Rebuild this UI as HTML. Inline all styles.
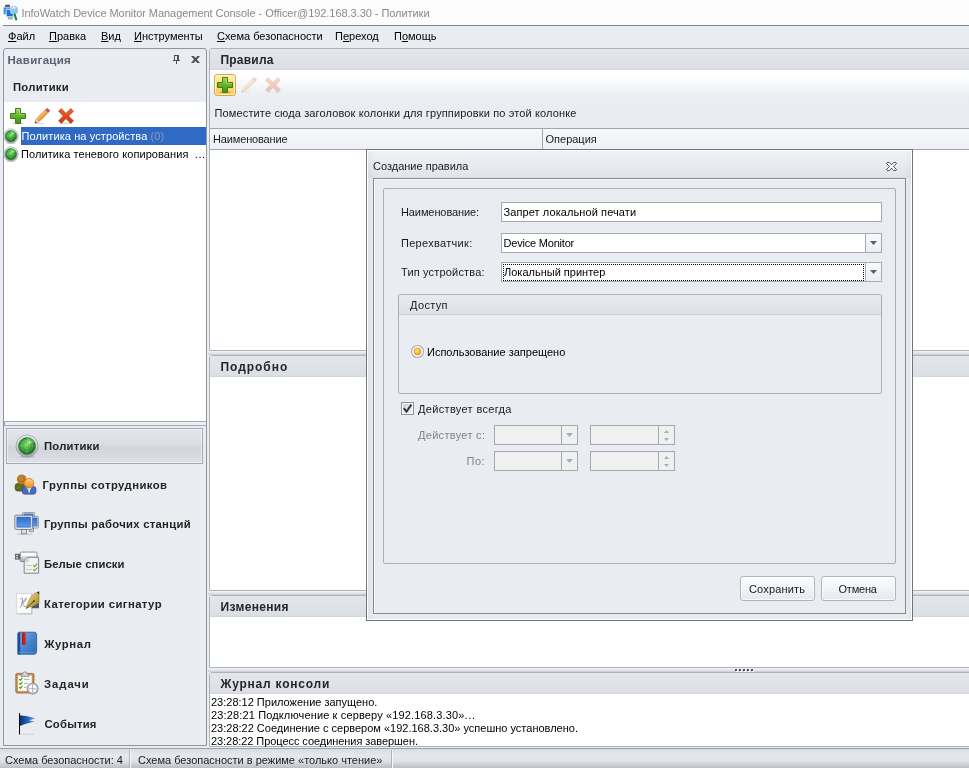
<!DOCTYPE html>
<html lang="ru">
<head>
<meta charset="utf-8">
<title>InfoWatch Device Monitor Management Console</title>
<style>
*{box-sizing:border-box;margin:0;padding:0}
html,body{width:969px;height:768px;overflow:hidden}
body{will-change:transform}
body{position:relative;background:#e9ecf1;font-family:"Liberation Sans",sans-serif;font-size:11px;color:#000;line-height:13px}
.a{position:absolute;white-space:nowrap}
.b{font-weight:bold}
svg{position:absolute;overflow:visible}
u{text-decoration:underline;text-underline-offset:1px}
#title{left:0;top:0;width:969px;height:25px;background:#fcfcfc}
#title .t{left:21.5px;top:6px;color:#8a8a8a;line-height:14px;letter-spacing:-0.05px}
#titleline{left:3px;top:25px;width:966px;height:1px;background:#7e848c}
#menu{left:0;top:26px;width:969px;height:22px}
#menu span{position:absolute;top:4px;line-height:13px}
.white{background:#fff}
.ptitle{font-weight:bold;font-size:12px;color:#262626;line-height:15px}
.nb{left:44.5px;font-weight:bold;font-size:11.3px;color:#242424;line-height:14px}
.rp{left:209px;width:770px;border:1px solid #adb2ba;border-radius:3px 0 0 0;background:#fff}
.hd{left:210px;width:759px;height:21px;background:linear-gradient(#e3e6eb,#dcdfe5 90%,#d2d6dc)}
.gap{left:208px;width:761px;height:4px;background:linear-gradient(#f4f5f7,#e6e8ec 45%,#c8cbd1)}
.fld{background:#fff;border:1px solid #a4aab3;height:20px}
.dis{background:#f0f0f0;border:1px solid #a3a9b3;height:20px}
.btn{border:1px solid #b0b5bd;border-radius:3px;background:linear-gradient(#fbfcfd,#f1f3f5 50%,#e6e9ed);width:75px;height:25px;box-shadow:inset 0 0 0 1px rgba(255,255,255,.7)}
.lbl{color:#1a1a1a}
</style>
</head>
<body>
<svg width="0" height="0" style="left:0;top:0">
<defs>
<linearGradient id="gGreen" x1="0" y1="0" x2="0" y2="1"><stop offset="0" stop-color="#a4d65c"/><stop offset=".45" stop-color="#6ab62e"/><stop offset="1" stop-color="#3f8f1c"/></linearGradient>
<linearGradient id="gRed" x1="0" y1="0" x2="0" y2="1"><stop offset="0" stop-color="#f0642c"/><stop offset="1" stop-color="#c8360c"/></linearGradient>
<linearGradient id="gSilver" x1="0" y1="0" x2="0" y2="1"><stop offset="0" stop-color="#e6e7e9"/><stop offset=".5" stop-color="#c4c6c9"/><stop offset="1" stop-color="#94979b"/></linearGradient>
<radialGradient id="gRadar" cx=".45" cy=".4" r=".62"><stop offset="0" stop-color="#7ad460"/><stop offset=".5" stop-color="#35a236"/><stop offset="1" stop-color="#17681f"/></radialGradient>
<linearGradient id="gScreen" x1="0" y1="0" x2="0" y2="1"><stop offset="0" stop-color="#2e6fd0"/><stop offset="1" stop-color="#5a9be6"/></linearGradient>
<linearGradient id="gBook" x1="0" y1="0" x2="1" y2="1"><stop offset="0" stop-color="#7ab0e6"/><stop offset=".5" stop-color="#4a88d0"/><stop offset="1" stop-color="#2f68b8"/></linearGradient>
<linearGradient id="gFlag" x1="0" y1="0" x2="1" y2="0"><stop offset="0" stop-color="#0c2f6e"/><stop offset=".6" stop-color="#2f6fc4"/><stop offset="1" stop-color="#7fb2ea"/></linearGradient>
<linearGradient id="gOrange" x1="0" y1="0" x2="0" y2="1"><stop offset="0" stop-color="#fdd48a"/><stop offset="1" stop-color="#ee8a1a"/></linearGradient>
<linearGradient id="gBrown" x1="0" y1="0" x2="0" y2="1"><stop offset="0" stop-color="#d08a3a"/><stop offset="1" stop-color="#8a4c12"/></linearGradient>
<radialGradient id="gDot" cx=".4" cy=".35" r=".7"><stop offset="0" stop-color="#ffe870"/><stop offset="1" stop-color="#f09a10"/></radialGradient>
<linearGradient id="gChk" x1="0" y1="0" x2="1" y2="1"><stop offset="0" stop-color="#cfd1d6"/><stop offset="1" stop-color="#f4f5f6"/></linearGradient>
<linearGradient id="gUsb" x1="0" y1="0" x2="0" y2="1"><stop offset="0" stop-color="#fafafa"/><stop offset=".55" stop-color="#d4d6d9"/><stop offset="1" stop-color="#a2a5a9"/></linearGradient>
<symbol id="plus" viewBox="0 0 16 16"><ellipse cx="8" cy="15.3" rx="6" ry=".9" fill="#000" opacity=".18"/><path d="M5.5,.5h5v5h5v5h-5v5h-5v-5h-5v-5h5z" fill="url(#gGreen)" stroke="#3c7f1c" stroke-width="1" stroke-linejoin="round"/><path d="M6.5,1.5h3v5h5" fill="none" stroke="#c9ea9a" stroke-width="1" opacity=".6"/></symbol>
<symbol id="pencil" viewBox="0 0 16 16"><ellipse cx="5" cy="15.5" rx="5" ry=".7" fill="#000" opacity=".15"/><path d="M1,15 L2.2,11.2 L11.3,2.1 L13.9,4.7 L4.8,13.8 Z" fill="#f6a12a" stroke="#b8690c" stroke-width=".7"/><path d="M3,11.6 L11.8,2.8" stroke="#fdd890" stroke-width="1"/><path d="M1,15 L2.2,11.2 L4.8,13.8 Z" fill="#f4dcb8"/><path d="M1,15 L1.6,13.1 L2.9,14.4 Z" fill="#3a3a3a"/><path d="M11.3,2.1 L12.8,.6 Q13.3,.2 13.9,.7 L15.3,2.1 Q15.8,2.7 15.4,3.2 L13.9,4.7 Z" fill="#d9534f" stroke="#a8322e" stroke-width=".5"/><path d="M10.6,2.8 L13.2,5.4 L13.9,4.7 L11.3,2.1 Z" fill="#b8bcc4"/></symbol>
<symbol id="xred" viewBox="0 0 16 16"><ellipse cx="8" cy="15.4" rx="6" ry=".8" fill="#000" opacity=".15"/><path d="M3.2,.6 L8,5.4 L12.8,.6 L15.4,3.2 L10.6,8 L15.4,12.8 L12.8,15.4 L8,10.6 L3.2,15.4 L.6,12.8 L5.4,8 L.6,3.2 Z" fill="url(#gRed)" stroke="#b8340c" stroke-width=".7" stroke-linejoin="round"/></symbol>
<symbol id="radar" viewBox="0 0 24 24"><ellipse cx="12" cy="22.8" rx="8" ry="1.1" fill="#000" opacity=".13"/><circle cx="12" cy="12" r="11" fill="url(#gSilver)" stroke="#8e9297" stroke-width=".7"/><circle cx="12" cy="12" r="10.2" fill="none" stroke="#fff" stroke-width=".6" opacity=".45"/><circle cx="12" cy="12" r="8.3" fill="url(#gRadar)" stroke="#1f6a24" stroke-width=".8"/><g fill="none" stroke="#b8f0a8" stroke-width=".5" opacity=".5"><circle cx="12" cy="12" r="2.8"/><circle cx="12" cy="12" r="5.6"/><path d="M12,4v16M4,12h16"/></g><path d="M12,12 L12,3.9 A8.1,8.1 0 0 1 19.4,8.6 Z" fill="#c8ffb0" opacity=".32"/><circle cx="14.6" cy="8.2" r="1" fill="#e8ffe0" opacity=".8"/></symbol>
<symbol id="arrd" viewBox="0 0 7 4"><path d="M0,0h7L3.5,4z"/></symbol>
</defs>
</svg>
<!-- title bar -->
<div id="title" class="a"><span class="a t">InfoWatch Device Monitor Management Console - Officer@192.168.3.30 - Политики</span></div>
<svg style="left:3px;top:4px" width="16" height="16" viewBox="0 0 16 16">
<rect x="2" y=".8" width="5" height="2.4" rx=".6" fill="#4a4e62"/>
<rect x=".5" y="3.2" width="7" height="7" fill="#2f8ee6" stroke="#c8d4e4" stroke-width=".8"/>
<rect x="3.2" y="5.2" width="7" height="7.6" fill="#1a72dc" stroke="#dfe6f0" stroke-width=".9"/>
<rect x="5.2" y="13.3" width="4.6" height="1.8" fill="#b4bcc8" stroke="#8a92a0" stroke-width=".4"/>
<circle cx="11" cy="6.2" r="3.9" fill="#8fc6f4" stroke="#b8c6dc" stroke-width="1"/>
<path d="M9,4.6 A2.6,2.6 0 0 1 12.6,4.2" stroke="#eaf5ff" stroke-width="1.2" fill="none"/>
<path d="M11.6,10.4 L13.2,15.4" stroke="#14901c" stroke-width="2.1" stroke-linecap="round"/>
</svg>
<div id="titleline" class="a"></div>
<!-- menu -->
<div id="menu" class="a">
<span style="left:8px"><u>Ф</u>айл</span>
<span style="left:49px"><u>П</u>равка</span>
<span style="left:101px"><u>В</u>ид</span>
<span style="left:134px"><u>И</u>нструменты</span>
<span style="left:217px"><u>С</u>хема безопасности</span>
<span style="left:335px">П<u>е</u>реход</span>
<span style="left:394px">П<u>о</u>мощь</span>
</div>
<!-- NAV PANEL -->
<div class="a" style="left:3px;top:48px;width:204px;height:698px;border:1px solid #8f959d;border-radius:3px 3px 0 0;background:#e9ecf1"></div>
<span class="a b" style="left:7.5px;top:54px;color:#5a5f72;font-size:11.5px;letter-spacing:.3px">Навигация</span>
<svg style="left:173px;top:55px" width="7" height="9" viewBox="0 0 7 9" shape-rendering="crispEdges"><path d="M1,0h5v5h-5z M2,1v4h2v-4z" fill="#4d5058" fill-rule="evenodd"/><rect x="0" y="5" width="7" height="1" fill="#4d5058"/><rect x="3" y="6" width="1" height="3" fill="#4d5058"/></svg>
<svg style="left:191px;top:56px" width="9" height="7" viewBox="0 0 9 7"><path d="M0,0h2.7l1.8,2L6.3,0h2.7L5.9,3.5L9,7h-2.7L4.500,5L2.700,7h-2.700L3.100,3.500z" fill="#4d5058"/></svg>
<span class="a b" style="left:13px;top:81px;color:#242424;font-size:11.3px;letter-spacing:.25px">Политики</span>
<div class="a white" style="left:4px;top:102px;width:202px;height:319px"></div>
<svg style="left:10px;top:108px" width="16" height="16"><use href="#plus"/></svg>
<svg style="left:34px;top:108px" width="16" height="16"><use href="#pencil"/></svg>
<svg style="left:58px;top:108px" width="16" height="16"><use href="#xred"/></svg>
<div class="a" style="left:21px;top:127px;width:185px;height:18px;background:#316ac5"></div>
<svg style="left:3px;top:128px" width="16" height="16"><use href="#radar"/></svg>
<svg style="left:3px;top:146px" width="16" height="16"><use href="#radar"/></svg>
<span class="a" style="left:21.5px;top:130px;color:#fff;letter-spacing:.1px">Политика на устройства <span style="color:#8c9cb8">(0)</span></span>
<span class="a" style="left:21px;top:148px;letter-spacing:.08px">Политика теневого копирования&nbsp; <span style="letter-spacing:.6px">...</span></span>
<!-- splitter -->
<div class="a" style="left:4px;top:421px;width:202px;height:5px;background:#eceef2;border:1px solid #a4aab3;border-right:none"></div>
<!-- nav buttons -->
<div class="a" style="left:6px;top:428px;width:197px;height:36px;border:1px solid #a3aab5;background:linear-gradient(#e3e6eb,#d9dce2 45%,#d1d5dc 55%,#dcdfe5);box-shadow:inset 0 0 0 1px rgba(255,255,255,.55)"></div>
<svg style="left:14.6px;top:434.2px" width="24" height="24"><use href="#radar"/></svg>
<span class="a nb" style="top:439px;left:44px;letter-spacing:.2px">Политики</span>
<!-- users -->
<svg style="left:14px;top:473.5px" width="23" height="21" viewBox="0 0 23 21">
<rect x="1.2" y="9.4" width="12" height="7.6" rx="2.6" fill="#5b6d1e" stroke="#4a5618" stroke-width=".8"/>
<path d="M3,14.5 L5.5,12.5" stroke="#7a8c3a" stroke-width=".8"/>
<circle cx="7.7" cy="5.3" r="4.3" fill="#b0742a" stroke="#d67c14" stroke-width="1.1"/>
<circle cx="7.2" cy="4.6" r="2.2" fill="#c89048" opacity=".7"/>
<rect x="8.3" y="12.6" width="13.6" height="7.5" rx="2.4" fill="#3a72c8" stroke="#5c3c92" stroke-width=".9"/>
<path d="M12.6,13.2 L15.1,17.4 L17.6,13.2 Z" fill="#f2f5fa"/><path d="M14.5,15.4h1.2v3.4h-1.2z" fill="#dfe6f2"/>
<circle cx="15.1" cy="9.2" r="4.7" fill="url(#gOrange)" stroke="#e2851a" stroke-width="1"/>
</svg>
<span class="a nb" style="top:478px;left:42.5px;letter-spacing:.45px">Группы сотрудников</span>
<!-- monitors -->
<svg style="left:14px;top:512px" width="25" height="23" viewBox="0 0 25 23">
<ellipse cx="11" cy="22.2" rx="8.5" ry=".9" fill="#000" opacity=".13"/>
<rect x="8.4" y=".5" width="12.2" height="9" rx=".8" fill="#eceef0" stroke="#85888d" stroke-width=".8"/><rect x="9.9" y="1.9" width="9.2" height="6" fill="url(#gScreen)" stroke="#2a5cb8" stroke-width=".5"/>
<rect x="15" y="4.4" width="9.4" height="11.6" rx=".8" fill="#eceef0" stroke="#85888d" stroke-width=".8"/><rect x="16.3" y="5.9" width="6.8" height="8.2" fill="url(#gScreen)" stroke="#2a5cb8" stroke-width=".5"/>
<rect x="15.6" y="16.2" width="3.8" height="3.2" fill="#dcdde0" stroke="#6e7176" stroke-width=".7"/>
<rect x=".9" y="3.2" width="17.4" height="14.2" rx=".9" fill="#f0f1f3" stroke="#707378" stroke-width=".9"/><rect x="2.9" y="5.1" width="13.4" height="10" fill="url(#gScreen)" stroke="#2a5cb8" stroke-width=".7"/>
<rect x="7.4" y="17.6" width="5" height="4.2" fill="#dcdde0" stroke="#6e7176" stroke-width=".7"/>
</svg>
<span class="a nb" style="top:517px;left:44px;letter-spacing:.27px">Группы рабочих станций</span>
<!-- whitelist -->
<svg style="left:14px;top:551px" width="25" height="23" viewBox="0 0 25 23">
<rect x="6.2" y="1.1" width="16.8" height="9.4" rx=".9" fill="url(#gUsb)" stroke="#74777c" stroke-width=".8"/><rect x="7" y="1.9" width="15.2" height="3" fill="#fff" opacity=".85"/>
<rect x="1" y="2.8" width="5.2" height="5.8" fill="#65686d"/><rect x="2.2" y="3.9" width="1.6" height="1.3" fill="#e4e6ea"/><rect x="2.2" y="6.2" width="1.6" height="1.3" fill="#e4e6ea"/>
<path d="M14,6.3 L24.6,6.3 L24.6,22.2 L10.2,22.2 L10.2,10.2 Z" fill="#f1f2f2" stroke="#74777c" stroke-width=".9" stroke-linejoin="round"/><path d="M14,6.3 L14,10.2 L10.2,10.2 Z" fill="#fbfbfb" stroke="#8c8f94" stroke-width=".6"/>
<path d="M12,14.6h5.8M12,18.6h5.8" stroke="#b4b7bc" stroke-width=".8"/>
<path d="M19.2,14l1.4,1.6l2.7,-3.1M19.2,18.2l1.4,1.6l2.7,-3.1" stroke="#739c24" stroke-width="1.05" fill="none"/>
</svg>
<span class="a nb" style="top:557px;left:44px;letter-spacing:.08px">Белые списки</span>
<!-- signatures -->
<svg style="left:15px;top:591px" width="25" height="24" viewBox="0 0 25 24">
<defs><linearGradient id="gNib" x1="0" y1="0" x2="1" y2="1"><stop offset="0" stop-color="#f4e9b8"/><stop offset=".5" stop-color="#cdb052"/><stop offset="1" stop-color="#9a7c26"/></linearGradient></defs>
<path d="M2.3,3.3h15v20h-15z" fill="#a9abaf"/><path d="M1.4,2.4h15.2v20h-15.2z" fill="#fcfcfc" stroke="#c0c2c6" stroke-width=".6"/>
<path d="M5,8.4 Q7,5.4 7.6,7.6 Q7.8,12 5.4,16.6 M6.8,12.6 Q9.4,8.4 11.4,7 Q10.6,10.4 7.6,12.6 Q9,16.4 11.4,16" stroke="#85888d" stroke-width=".8" fill="none"/>
<path d="M18.6,12h5.4v5.2h-7.6z" fill="#56595e"/>
<path d="M11,17.5 Q13.2,9.6 16.4,5.2 Q19,2 22.3,1.2 L24,3.2 L24,11.4 Q21,14 17.6,15.2 Q14,16.2 11,17.5 Z" fill="url(#gNib)" stroke="#8a7226" stroke-width=".5"/>
<path d="M11.2,17.3 L18.4,10.6" stroke="#3a3010" stroke-width=".8"/><circle cx="18.8" cy="10.2" r=".9" fill="#2e280e"/>
<path d="M22,1 L24.2,.6 L24.2,3.4 Z" fill="#1e1e1e"/>
</svg>
<span class="a nb" style="top:597px;left:44px;letter-spacing:.42px">Категории сигнатур</span>
<!-- journal -->
<svg style="left:17px;top:631px" width="21" height="24" viewBox="0 0 21 24">
<path d="M2.6,1.2 H17.2 Q19.6,1.2 19.6,3.6 V20.8 Q19.6,23.2 17.2,23.2 H.8 V3 Q.8,1.2 2.6,1.2 Z" fill="url(#gBook)" stroke="#2a5aa4" stroke-width=".8"/>
<path d="M.8,3 Q.8,1.2 2.6,1.2 L3.2,1.2 L3.2,23.2 L.8,23.2 Z" fill="#1d4c98"/>
<path d="M1,21.6 H18.6" stroke="#8cb4e2" stroke-width=".6" opacity=".7"/>
<rect x="5.2" y="1.6" width="3.4" height="12.2" fill="#e01c10"/><rect x="5.2" y="1.6" width="1" height="12.2" fill="#a8140c"/>
</svg>
<span class="a nb" style="top:637px;left:44.3px;letter-spacing:.6px">Журнал</span>
<!-- tasks -->
<svg style="left:15px;top:671px" width="25" height="25" viewBox="0 0 25 25">
<rect x=".8" y="2.4" width="18.2" height="19.6" rx="1.4" fill="#c48e54" stroke="#9a6a34" stroke-width=".8"/>
<rect x="3" y="4.4" width="13.8" height="15.6" fill="#fafafa" stroke="#e4d4bc" stroke-width=".4"/>
<path d="M6,5.6 V4 Q6,3.2 6.9,3.2 H7.4 A2.5,2.4 0 0 1 12.400,3.200 H12.900 Q13.800,3.200 13.800,4 V5.600 Z" fill="#c8cace" stroke="#85888d" stroke-width=".7"/><circle cx="9.9" cy="2.6" r=".8" fill="#eef0f2"/>
<path d="M4.2,8l1.2,1.3l2,-2.4M4.2,12l1.2,1.3l2,-2.4M4.2,16l1.2,1.3l2,-2.4" stroke="#4a9c14" stroke-width="1.1" fill="none"/>
<path d="M9,8.4h5.4M9,12.4h4M9,16.4h2.6" stroke="#9a9da2" stroke-width=".8"/>
<circle cx="17.6" cy="17.6" r="5.9" fill="#7e8186"/><circle cx="17.6" cy="17.6" r="5.3" fill="#b4b6ba"/><circle cx="17.6" cy="17.6" r="4" fill="#fdfdfd"/>
<path d="M17.6,13.6v8M14,17.8h7.2" stroke="#8c8f94" stroke-width=".7"/>
</svg>
<span class="a nb" style="top:677px;left:44px;letter-spacing:.95px">Задачи</span>
<!-- flag -->
<svg style="left:17px;top:712px" width="20" height="23" viewBox="0 0 20 23">
<path d="M2,22.2 H17" stroke="#000" stroke-width=".8" opacity=".15"/>
<path d="M2.9,3.2 Q10,3.6 18.4,6.2 L12.2,8.5 L17.9,9.6 Q9,11.6 2.9,14 Z" fill="url(#gFlag)"/>
<rect x="2" y="1" width="1" height="21.4" fill="#0a0a0a"/>
</svg>
<span class="a nb" style="top:717px;left:44.5px;letter-spacing:.2px">События</span>
<!-- RULES PANEL -->
<div class="a rp" style="top:48px;height:303px"></div>
<div class="a hd" style="top:49px"></div>
<span class="a ptitle" style="left:220.5px;top:53px;letter-spacing:.2px">Правила</span>
<div class="a" style="left:210px;top:70px;width:759px;height:58px;background:linear-gradient(#fff 0,#fefefe 8px,#f3f4f7 18px,#eaedf1 27px,#e9ecf1 100%)"></div>
<div class="a" style="left:214px;top:74px;width:22px;height:22px;border:1px solid #e3a33c;border-radius:3px;background:linear-gradient(#fdf0b8,#fbdc78 50%,#f8cd5a);box-shadow:inset 0 0 0 1px rgba(255,248,210,.8)"></div>
<svg style="left:217px;top:77px" width="16" height="16"><use href="#plus"/></svg>
<svg style="left:241px;top:77px;opacity:.26" width="16" height="16"><use href="#pencil"/></svg>
<svg style="left:265px;top:77px;opacity:.25" width="16" height="16"><use href="#xred"/></svg>
<span class="a lbl" style="left:214.5px;top:107px;letter-spacing:.14px">Поместите сюда заголовок колонки для группировки по этой колонке</span>
<div class="a" style="left:210px;top:128px;width:759px;height:22px;background:linear-gradient(#f6f7f9,#eef0f3);border-top:1px solid #a0a6ae;border-bottom:1px solid #a0a6ae"></div>
<div class="a" style="left:542px;top:129px;width:1px;height:20px;background:#a0a6ae"></div>
<span class="a lbl" style="left:213px;top:133px;letter-spacing:-.15px">Наименование</span>
<span class="a lbl" style="left:545.5px;top:133px">Операция</span>

<!-- DETAILS PANEL -->
<div class="a gap" style="top:351px"></div>
<div class="a rp" style="top:355px;height:236px"></div>
<div class="a hd" style="top:356px"></div>
<span class="a ptitle" style="left:220.5px;top:360px;letter-spacing:.95px">Подробно</span>

<!-- CHANGES PANEL -->
<div class="a gap" style="top:591px"></div>
<div class="a rp" style="top:595px;height:73px"></div>
<div class="a hd" style="top:596px"></div>
<span class="a ptitle" style="left:220.5px;top:600px;letter-spacing:.33px">Изменения</span>

<!-- CONSOLE LOG -->
<div class="a gap" style="top:668px"></div>
<svg style="left:735px;top:669px" width="19" height="3" viewBox="0 0 19 3"><g fill="#fff"><rect x="1" y="1" width="2" height="2"/><rect x="5" y="1" width="2" height="2"/><rect x="9" y="1" width="2" height="2"/><rect x="13" y="1" width="2" height="2"/><rect x="17" y="1" width="2" height="2"/></g><g fill="#4a4e55"><rect x="0" y="0" width="2" height="2"/><rect x="4" y="0" width="2" height="2"/><rect x="8" y="0" width="2" height="2"/><rect x="12" y="0" width="2" height="2"/><rect x="16" y="0" width="2" height="2"/></g></svg>
<div class="a rp" style="top:672px;height:75px"></div>
<div class="a hd" style="top:673px"></div>
<span class="a ptitle" style="left:220.5px;top:677px;letter-spacing:.78px">Журнал консоли</span>
<span class="a" style="left:211px;top:696px">23:28:12 Приложение запущено.</span>
<span class="a" style="left:211px;top:709px;letter-spacing:.14px">23:28:21 Подключение к серверу «192.168.3.30»<span style="letter-spacing:.7px">...</span></span>
<span class="a" style="left:211px;top:722px">23:28:22 Соединение с сервером «192.168.3.30» успешно установлено.</span>
<span class="a" style="left:211px;top:735px;letter-spacing:-.06px">23:28:22 Процесс соединения завершен.</span>

<!-- STATUS BAR -->
<div class="a" style="left:0;top:748px;width:969px;height:20px;background:linear-gradient(#d9dce2,#e6e8ed 35%,#dfe1e6 65%,#bbbec4);border-top:1px solid #9aa0a8"></div>
<span class="a lbl" style="left:5px;top:754px">Схема безопасности: 4</span>
<div class="a" style="left:129px;top:750px;width:2px;height:18px;background:linear-gradient(90deg,#aeb3bb 50%,#f6f7f9 50%)"></div>
<span class="a lbl" style="left:138px;top:754px">Схема безопасности в режиме «только чтение»</span>
<div class="a" style="left:391px;top:750px;width:2px;height:18px;background:linear-gradient(90deg,#aeb3bb 50%,#f6f7f9 50%)"></div>
<!-- DIALOG -->
<div class="a" style="left:366px;top:149px;width:547px;height:472px;background:linear-gradient(90deg,#dfe2e7,#e9ecf1 10px,#e9ecf1 537px,#e1e4e9);border:1px solid #6f757d;box-shadow:inset 1px 1px 0 #fff,inset -1px -1px 0 #fff"></div>
<div class="a" style="left:368px;top:151px;width:543px;height:27px;background:linear-gradient(rgba(255,255,255,.28),rgba(255,255,255,0) 45%,rgba(60,70,90,.05))"></div>
<span class="a lbl" style="left:373px;top:160px">Создание правила</span>
<svg style="left:886px;top:162px" width="11" height="9" viewBox="0 0 11 9"><path d="M1.2,.5h2.2L5.5,2.9L7.6,.5h2.2Q10.9,.9 10.2,1.8L7.4,4.5L10.2,7.2Q10.9,8.1 9.8,8.5H7.6L5.5,6.1L3.4,8.5H1.2Q.1,8.1 .8,7.2L3.6,4.5L.8,1.8Q.1,.9 1.2,.5Z" fill="#fff" stroke="#3c4046" stroke-width=".9" stroke-linejoin="round"/></svg>
<div class="a" style="left:373px;top:178px;width:533px;height:436px;border:1px solid #858b93;box-shadow:inset 1px 1px 0 #f8f9fa"></div>
<div class="a" style="left:383px;top:188px;width:513px;height:376px;border:1px solid #a9afb7;border-radius:2px"></div>
<span class="a lbl" style="left:401px;top:206px;letter-spacing:-.1px">Наименование:</span>
<span class="a lbl" style="left:401px;top:237px;letter-spacing:.3px">Перехватчик:</span>
<span class="a lbl" style="left:401px;top:266px;letter-spacing:.17px">Тип устройства:</span>
<div class="a fld" style="left:501px;top:202px;width:381px"></div>
<span class="a" style="left:503.5px;top:206px;letter-spacing:.09px">Запрет локальной печати</span>
<div class="a fld" style="left:501px;top:233px;width:381px"></div>
<div class="a" style="left:865px;top:234px;width:16px;height:18px;border-left:1px solid #a4aab3;background:linear-gradient(#f9fafb,#eceef2)"></div>
<svg style="left:870px;top:241px" width="7" height="4"><use href="#arrd" fill="#5a6068"/></svg>
<span class="a" style="left:503.5px;top:237px;letter-spacing:-.2px">Device Monitor</span>
<div class="a fld" style="left:501px;top:262px;width:381px"></div>
<div class="a" style="left:865px;top:263px;width:16px;height:18px;border-left:1px solid #a4aab3;background:linear-gradient(#f9fafb,#eceef2)"></div>
<svg style="left:870px;top:270px" width="7" height="4"><use href="#arrd" fill="#5a6068"/></svg>
<div class="a" style="left:503px;top:264px;width:361px;height:17px;border:1px dotted #000"></div>
<span class="a" style="left:504px;top:266px">Локальный принтер</span>
<!-- group -->
<div class="a" style="left:398px;top:294px;width:484px;height:100px;border:1px solid #a9afb7;border-radius:2px"></div>
<div class="a" style="left:399px;top:295px;width:482px;height:20px;background:linear-gradient(#e8ebf0,#dde0e5);border-bottom:1px solid #cdd1d7"></div>
<span class="a lbl" style="left:410px;top:299px;letter-spacing:.35px">Доступ</span>
<svg style="left:411px;top:345px" width="13" height="13" viewBox="0 0 13 13"><circle cx="6.5" cy="6.5" r="6" fill="#fdfdfd" stroke="#a4aab8" stroke-width="1.1"/><circle cx="6.5" cy="6.5" r="4.6" fill="none" stroke="#eceef2" stroke-width="1"/><circle cx="6.5" cy="6.5" r="3.4" fill="url(#gDot)" stroke="#e89418" stroke-width=".8"/></svg>
<span class="a" style="left:427px;top:346px">Использование запрещено</span>
<svg style="left:401px;top:402px" width="13" height="13" viewBox="0 0 13 13"><rect x=".5" y=".5" width="12" height="12" fill="#fbfbfc" stroke="#8f959d"/><rect x="2" y="2" width="9" height="9" fill="url(#gChk)"/><path d="M2.8,6.2 L5.5,9.7 L10.3,2.6" stroke="#2e3238" stroke-width="1.9" fill="none"/></svg>
<span class="a lbl" style="left:418px;top:403px;letter-spacing:.33px">Действует всегда</span>
<span class="a" style="left:418px;top:429px;color:#7e838c;letter-spacing:.3px">Действует с:</span>
<span class="a" style="left:466.5px;top:455px;color:#7e838c;letter-spacing:.5px">По:</span>
<div class="a dis" style="left:494px;top:425px;width:84px"></div><div class="a" style="left:561px;top:426px;width:1px;height:18px;background:#a3a9b3"></div>
<svg style="left:566px;top:433px" width="7" height="4"><use href="#arrd" fill="#a9aeb6"/></svg>
<div class="a dis" style="left:494px;top:451px;width:84px"></div><div class="a" style="left:561px;top:452px;width:1px;height:18px;background:#a3a9b3"></div>
<svg style="left:566px;top:459px" width="7" height="4"><use href="#arrd" fill="#a9aeb6"/></svg>
<div class="a dis" style="left:590px;top:425px;width:85px"></div><div class="a" style="left:658px;top:426px;width:1px;height:18px;background:#a3a9b3"></div>
<svg style="left:664px;top:430px" width="5" height="11" viewBox="0 0 5 11"><path d="M0,3h5L2.5,0zM0,8h5L2.5,11z" fill="#a9aeb6"/></svg>
<div class="a dis" style="left:590px;top:451px;width:85px"></div><div class="a" style="left:658px;top:452px;width:1px;height:18px;background:#a3a9b3"></div>
<svg style="left:664px;top:456px" width="5" height="11" viewBox="0 0 5 11"><path d="M0,3h5L2.5,0zM0,8h5L2.5,11z" fill="#a9aeb6"/></svg>
<!-- buttons -->
<div class="a btn" style="left:740px;top:576px"></div>
<span class="a lbl" style="left:749px;top:583px;letter-spacing:.15px">Сохранить</span>
<div class="a btn" style="left:821px;top:576px"></div>
<span class="a lbl" style="left:838.5px;top:583px;letter-spacing:-.2px">Отмена</span>
</body>
</html>
